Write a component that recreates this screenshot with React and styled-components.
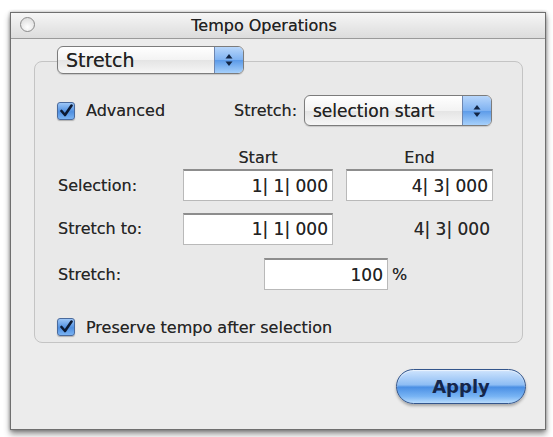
import React from 'react'
import styled, { createGlobalStyle } from 'styled-components'

const Global = createGlobalStyle`
  html, body {
    margin: 0;
    padding: 0;
    background: #ffffff;
  }
  body {
    font-family: 'DejaVu Sans', 'Liberation Sans', sans-serif;
    color: #1e1e1e;
  }
`

const Page = styled.div`
  width: 553px;
  height: 437px;
  padding: 12px 0 0 10px;
  box-sizing: border-box;
`

const Window = styled.div`
  width: 536px;
  height: 418px;
  box-sizing: border-box;
  border: 1px solid #6f6f6f;
  background: #ececec;
  box-shadow: 0 4px 6px rgba(0, 0, 0, 0.45), 0 0 3px rgba(0, 0, 0, 0.3);
  display: flex;
  flex-direction: column;
`

const TitleBar = styled.div`
  height: 25px;
  border-bottom: 1px solid #9a9a9a;
  background: linear-gradient(#f6f6f6, #dcdcdc);
  display: flex;
  align-items: center;
  position: relative;
  justify-content: center;
  padding-right: 28px;
`

const CloseDot = styled.span`
  position: absolute;
  left: 9px;
  top: 4px;
  width: 13px;
  height: 13px;
  border-radius: 50%;
  border: 1px solid #8a8a8a;
  background: radial-gradient(circle at 50% 70%, #ffffff, #d6d6d6);
`

const Title = styled.div`
  font-size: 16px;
  color: #222;
  text-shadow: 0 0 0.5px rgba(0, 0, 0, 0.6);
`

const Body = styled.div`
  flex: 1;
  display: flex;
  flex-direction: column;
  padding-top: 7px;
`

const PopupWrap = styled.div`
  position: relative;
  z-index: 1;
  margin-left: ${p => p.$ml || 0}px;
  width: ${p => p.$w}px;
  height: ${p => p.$h}px;
  box-sizing: border-box;
  border: 1px solid #7c7c7c;
  border-radius: 6px;
  background: linear-gradient(#ffffff, #f3f3f3 50%, #e4e4e4 51%, #f6f6f6);
  display: flex;
  overflow: hidden;
  box-shadow: 0 1px 1px rgba(0, 0, 0, 0.15);
`

const PopupText = styled.div`
  flex: 1;
  display: flex;
  align-items: center;
  padding-left: ${p => p.$pl || 8}px;
  font-size: ${p => p.$fs || 15}px;
  color: #222;
  text-shadow: 0 0 0.5px rgba(0, 0, 0, 0.6);
  white-space: nowrap;
`

const PopupArrow = styled.div`
  width: 28px;
  flex-shrink: 0;
  border-left: 1px solid #6d86b0;
  background: linear-gradient(#b7d6fb, #7fb2f1 50%, #5b9ae8 51%, #a6d0fb);
  display: flex;
  align-items: center;
  justify-content: center;
`

const Group = styled.div`
  margin: -13px 0 0 23px;
  width: 489px;
  height: 282px;
  box-sizing: border-box;
  border: 1px solid #c4c4c4;
  border-radius: 8px;
  background: #e9e9e9;
  padding: 33px 0 0 22px;
  display: flex;
  flex-direction: column;
`

const Row = styled.div`
  display: flex;
  align-items: center;
  height: ${p => p.$h}px;
  margin-top: ${p => p.$mt || 0}px;
`

const CheckBox = styled.span`
  width: 18px;
  height: 18px;
  flex-shrink: 0;
  box-sizing: border-box;
  border: 1px solid #4a6a9c;
  border-radius: 3px;
  background: linear-gradient(#9cc6f7, #4f8fe0 55%, #7ab3f3);
  display: flex;
  align-items: center;
  justify-content: center;
  margin-right: 11px;
  box-shadow: 0 1px 1px rgba(0, 0, 0, 0.25);
`

const Label = styled.span`
  font-size: 16px;
  color: #262626;
  text-shadow: 0 0 0.5px rgba(0, 0, 0, 0.5);
  white-space: nowrap;
  width: ${p => (p.$w ? `${p.$w}px` : 'auto')};
  margin-left: ${p => p.$ml || 0}px;
  flex-shrink: 0;
`

const Field = styled.div`
  width: ${p => p.$w}px;
  height: 32px;
  flex-shrink: 0;
  box-sizing: border-box;
  margin-left: ${p => p.$ml || 0}px;
  background: #ffffff;
  border: 1px solid #b9b9b9;
  border-top: 2px solid #8d8d8d;
  display: flex;
  align-items: center;
  justify-content: flex-end;
  padding-right: 4px;
  font-size: 17px;
  color: #222;
  text-shadow: 0 0 0.5px rgba(0, 0, 0, 0.5);
`

const Header = styled.span`
  width: ${p => p.$w}px;
  margin-left: ${p => p.$ml || 0}px;
  text-align: center;
  font-size: 16px;
  color: #262626;
  text-shadow: 0 0 0.5px rgba(0, 0, 0, 0.5);
`

const Plain = styled.span`
  width: ${p => p.$w}px;
  margin-left: ${p => p.$ml || 0}px;
  text-align: right;
  font-size: 17px;
  color: #262626;
  text-shadow: 0 0 0.5px rgba(0, 0, 0, 0.5);
`

const Footer = styled.div`
  display: flex;
  justify-content: flex-end;
  padding: 26px 19px 0 0;
`

const ApplyButton = styled.button`
  width: 130px;
  height: 35px;
  border-radius: 18px;
  border: 1px solid #34568c;
  background: linear-gradient(#cfe4fd, #8dbdf4 45%, #4a8fe4 52%, #78b4f4 80%, #b9dcfd);
  box-shadow: 0 2px 3px rgba(0, 0, 0, 0.3), inset 0 1px 1px rgba(255, 255, 255, 0.6);
  font-family: 'DejaVu Sans', 'Liberation Sans', sans-serif;
  font-size: 18px;
  font-weight: 700;
  color: #15264a;
  padding: 0;
`

const Check = () => (
  <svg width="14" height="14" viewBox="0 0 14 14">
    <path d="M2.5 7 L6 11 L12.5 1.5" fill="none" stroke="#0c1a33" strokeWidth="2.6" strokeLinecap="round" strokeLinejoin="round" />
  </svg>
)

const Arrows = () => (
  <svg width="10" height="16" viewBox="0 0 10 16">
    <path d="M5 2 L8.5 6.5 L1.5 6.5 Z" fill="#122544" />
    <path d="M5 14 L8.5 9.5 L1.5 9.5 Z" fill="#122544" />
  </svg>
)

const Popup = ({ children, ml, w, h, fs, pl }) => (
  <PopupWrap $ml={ml} $w={w} $h={h}>
    <PopupText $fs={fs} $pl={pl}>{children}</PopupText>
    <PopupArrow>
      <Arrows />
    </PopupArrow>
  </PopupWrap>
)

export default function App() {
  return (
    <Page>
      <Global />
      <Window>
        <TitleBar>
          <CloseDot />
          <Title>Tempo Operations</Title>
        </TitleBar>
        <Body>
          <Popup ml={46} w={187} h={28} fs={19} pl={8}>Stretch</Popup>
          <Group>
            <Row $h={31}>
              <CheckBox><Check /></CheckBox>
              <Label $w={148}>Advanced</Label>
              <Label $w={70}>Stretch:</Label>
              <Popup w={188} h={31} fs={17} pl={8}>selection start</Popup>
            </Row>
            <Row $h={18} $mt={22}>
              <Header $ml={126} $w={150}>Start</Header>
              <Header $ml={13} $w={147}>End</Header>
            </Row>
            <Row $h={32} $mt={3}>
              <Label $w={126} $ml={1}>Selection:</Label>
              <Field $w={150} $ml={-1}>1| 1| 000</Field>
              <Field $w={147} $ml={13}>4| 3| 000</Field>
            </Row>
            <Row $h={33} $mt={11}>
              <Label $w={126} $ml={1}>Stretch to:</Label>
              <Field $w={150} $ml={-1}>1| 1| 000</Field>
              <Plain $w={144} $ml={13}>4| 3| 000</Plain>
            </Row>
            <Row $h={32} $mt={13}>
              <Label $w={126} $ml={1}>Stretch:</Label>
              <Field $w={124} $ml={80}>100</Field>
              <Label $ml={4}>%</Label>
            </Row>
            <Row $h={20} $mt={27}>
              <CheckBox><Check /></CheckBox>
              <Label>Preserve tempo after selection</Label>
            </Row>
          </Group>
          <Footer>
            <ApplyButton>Apply</ApplyButton>
          </Footer>
        </Body>
      </Window>
    </Page>
  )
}
